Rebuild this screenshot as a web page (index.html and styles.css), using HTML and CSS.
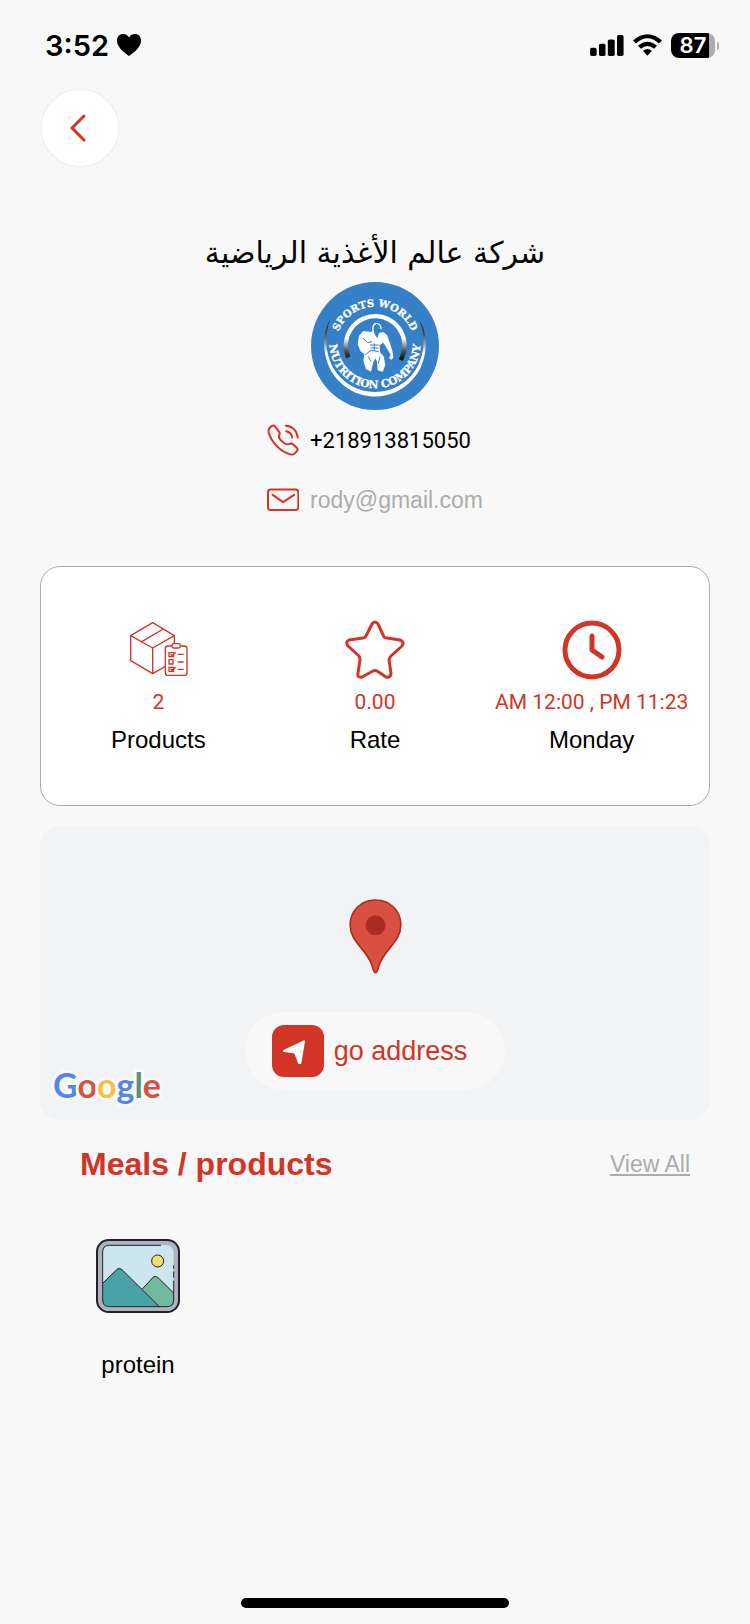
FILE: index.html
```
<!DOCTYPE html>
<html lang="en">
<head>
<meta charset="utf-8">
<meta name="viewport" content="width=device-width, initial-scale=1">
<title>Store profile</title>
<link rel="stylesheet" href="styles.css">
</head>
<body>
<div class="status">
  <div class="status-left">
    <span>3:52</span>
    <svg class="heart" viewBox="350 102 72 66" aria-hidden="true"><path d="M386 168C376 160 350 144 350 122C350 110 358 102 368 102C377 102 383 106 386 113C389 106 395 102 404 102C414 102 422 110 422 122C422 144 396 160 386 168Z"/></svg>
  </div>
  <div class="status-right">
    <svg class="signal" viewBox="93 72 103 64" aria-hidden="true"><rect x="93" y="111" width="20" height="25" rx="5"/><rect x="120" y="99" width="20" height="37" rx="5"/><rect x="147" y="86" width="21" height="50" rx="5"/><rect x="175" y="72" width="20" height="64" rx="5"/></svg>
    <svg class="wifi" viewBox="221 71 87 65" aria-hidden="true"><path d="M221 90Q264 52 308 90L299 99Q264 68 230 99Z"/><path d="M236 106Q264 81 293 106L284 115Q264 98 245 115Z"/><path d="M251 121Q264 110 278 121L264 136Z"/></svg>
    <div class="battery"><span>87</span></div>
  </div>
</div>

<main class="page">
  <button class="back" aria-label="Back">
    <svg viewBox="0 0 16 28" aria-hidden="true"><path d="M14 2L2 14L14 26"/></svg>
  </button>

  <section class="profile">
    <h1 lang="ar" dir="rtl">شركة عالم الأغذية الرياضية</h1>
    <svg class="logo" viewBox="33 21 384 384" role="img" aria-label="Sports World Nutrition Company">
      <defs>
        <linearGradient id="tail" x1="0" y1="135" x2="0" y2="235" gradientUnits="userSpaceOnUse"><stop offset="0" stop-color="#1a1a1a"/><stop offset=".4" stop-color="#444"/><stop offset="1" stop-color="#fff"/></linearGradient>
        <linearGradient id="ring" x1="0" y1="190" x2="0" y2="250" gradientUnits="userSpaceOnUse"><stop offset="0" stop-color="#fff"/><stop offset=".6" stop-color="#555"/><stop offset="1" stop-color="#111"/></linearGradient>
        <path id="top-arc" d="M107 213A118 118 0 0 1 343 213"/>
        <path id="bottom-arc" d="M92 170A137 137 0 1 0 358 170"/>
      </defs>
      <circle cx="225" cy="213" r="192" fill="#3680c7"/>
      <path d="M90 134C66 176 66 230 90 282C150 392 300 392 360 282C384 230 384 176 358 134C376 180 376 228 352 276C296 376 154 376 98 276C74 228 74 180 90 134Z" fill="url(#tail)"/>
      <path d="M145 247A88 88 0 1 1 302 255" fill="none" stroke="url(#ring)" stroke-width="13"/>
      <text class="logo-top"><textPath href="#top-arc" startOffset="50%" text-anchor="middle">SPORTS WORLD</textPath></text>
      <text class="logo-bottom"><textPath href="#bottom-arc" startOffset="50%" text-anchor="middle">NUTRITION COMPANY</textPath></text>
      <path fill="#fff" d="M220 165L213 171L190 168L177 182L173 207L181 228L193 238L190 258L198 282L213 290L220 262L226 250L231 260L233 286L248 290L256 270L251 244L240 232L239 210L250 203L260 219L272 240L267 249L274 254L280 248L277 228L270 205L261 180L249 171L237 174L232 190L224 178Z"/>
      <path fill="none" stroke="#fff" stroke-width="4" d="M219 168C214 137 244 140 243 163"/>
      <path fill="none" stroke="#3680c7" stroke-width="3" d="M190 190L202 203L216 200M223 205V226M209 210H236M211 219H235M196 239L213 226L236 230M205 244L213 260M240 245L235 266"/>
    </svg>
    <div class="contacts">
      <a class="contact phone" href="tel:+218913815050">
        <svg viewBox="55 42 97 97" aria-hidden="true"><path d="M79 49L92 66Q95 70 92 76C86 87 112 107 121 103Q127 100 132 102L146 115Q150 120 145 125C137 136 131 137 119 132C91 122 66 93 60 67C58 57 63 52 70 48Q75 45 79 49Z"/><path d="M112 47C132 48 146 62 148 83M113 64C124 66 130 73 131 83"/></svg>
        <span>+218913815050</span>
      </a>
      <a class="contact mail" href="mailto:rody@gmail.com">
        <svg viewBox="55 222 97 97" aria-hidden="true"><rect x="58" y="239" width="92" height="62" rx="8"/><path d="M72 255L104 277L137 255"/></svg>
        <span>rody@gmail.com</span>
      </a>
    </div>
  </section>

  <section class="stats">
    <div class="stat">
      <svg viewBox="292 180 180 180" aria-hidden="true"><g fill="none" stroke="#d23525" stroke-width="4" stroke-linejoin="round"><path d="M431 252V227L366 188L300 227V302L366 341L403 320M300 227L366 264L431 227M366 264V341M333 245L398 207"/><path d="M425 258H411Q404 258 404 266V338Q404 346 411 346H461Q469 346 469 338V266Q469 258 461 258H449"/><rect x="424" y="251" width="25" height="13" rx="5"/><path d="M430 278H415V290H429V284M420 282L424 287L435 277M415 299H427V312H415ZM430 322H415V334H429V328M420 326L424 331L435 321M441 283H459M441 306H459M441 328H459"/></g></svg>
      <strong>2</strong><span>Products</span>
    </div>
    <div class="stat">
      <svg viewBox="0 0 60 60" aria-hidden="true"><path fill="none" stroke="#d23525" stroke-width="3" stroke-linejoin="round" d="M27 4Q30 0 33 4L39 17Q40 18 42 18L55 20Q60 22 57 26L46 36Q44 38 44 40L46 53Q46 58 41 57L32 51Q30 50 28 51L17 57Q12 58 13 53L15 40Q15 38 14 36L3 26Q0 22 4 20L18 18Q20 18 21 16Z"/></svg>
      <strong>0.00</strong><span>Rate</span>
    </div>
    <div class="stat">
      <svg viewBox="0 0 60 60" aria-hidden="true"><g fill="none" stroke="#d23525" stroke-width="5" stroke-linecap="round" stroke-linejoin="round"><circle cx="30" cy="30" r="27"/><path d="M30 16V30L40 37"/></g></svg>
      <strong>AM 12:00 , PM 11:23</strong><span>Monday</span>
    </div>
  </section>

  <section class="map">
    <svg class="pin" viewBox="356 56 158 225" aria-hidden="true"><path fill="#d95040" stroke="#ab2c24" stroke-width="5" d="M435 59C391 59 359 92 359 134C359 184 406 205 423 251C427 262 429 277 435 277C441 277 443 262 447 251C464 205 511 184 511 134C511 92 479 59 435 59Z"/><circle cx="435" cy="135" r="30" fill="#ab2c24"/></svg>
    <button class="go">
      <span class="go-icon"><svg viewBox="126 435 156 156" aria-hidden="true"><path fill="#fff" stroke="#fff" stroke-width="6" stroke-linejoin="round" d="M222 484L162 513L191 517Q195 518 197 522L207 549H211Z"/></svg></span>
      <span>go address</span>
    </button>
    <div class="google" aria-label="Google"><span class="b">G</span><span class="r">o</span><span class="y">o</span><span class="b">g</span><span class="g">l</span><span class="r">e</span></div>
  </section>

  <section class="products">
    <header class="products-head">
      <h2>Meals / products</h2>
      <a href="#all">View All</a>
    </header>
    <div class="product-list">
      <a class="product" href="#protein">
        <svg viewBox="48 57 252 222" aria-hidden="true">
          <rect x="51" y="60" width="246" height="216" rx="35" fill="#b0b0bf" stroke="#202227" stroke-width="6"/>
          <rect x="68" y="76" width="213" height="184" rx="20" fill="#cce6ed"/>
          <path d="M184 209L219 172Q226 166 233 172L281 219V240Q281 260 261 260H230Z" fill="#6fb99d"/>
          <path d="M68 190L110 149Q118 141 126 149L238 260H88Q68 260 68 240Z" fill="#49a2a5"/>
          <g fill="none" stroke="#202227" stroke-width="3"><path d="M243 76H88Q68 76 68 96V240Q68 260 88 260H261Q281 260 281 240V182M281 173V154M281 146V136"/><path d="M68 190L110 149Q118 141 126 149L238 260M187 207L219 172Q226 166 233 172L281 219"/><circle cx="233" cy="123" r="18" fill="#f4dd71"/></g>
        </svg>
        <span>protein</span>
      </a>
    </div>
  </section>
</main>
<div class="home"></div>
</body>
</html>
```
FILE: styles.css
```
* { box-sizing: border-box; }
body {
  margin: 0;
  min-height: 100vh;
  display: flex;
  flex-direction: column;
  background: #f8f8f8;
  color: #000;
  font-family: "Liberation Sans", sans-serif;
  font-size: 24px;
}
svg { display: block; flex: none; }
a { color: inherit; text-decoration: none; }
button { font: inherit; cursor: pointer; }
h1, h2 { margin: 0; }

.status {
  display: flex;
  justify-content: space-between;
  align-items: center;
  height: 88px;
  padding: 2px 35px 0 45px;
  font-family: Inter, sans-serif;
  font-weight: 600;
}
.status-left { display: flex; align-items: center; gap: 8px; font-size: 29px; }
.heart { width: 24px; height: 22px; }
.status-right { display: flex; align-items: center; gap: 9px; }
.signal { width: 34px; height: 21px; }
.wifi { width: 29px; height: 22px; }
.battery {
  position: relative;
  width: 44px;
  height: 25px;
  border-radius: 8px;
  background: linear-gradient(to right, #000 38px, #acacac 38px);
  color: #fff;
  font-size: 22px;
  line-height: 25px;
  text-align: center;
}
.battery::after {
  content: "";
  position: absolute;
  left: 46px;
  top: 9px;
  width: 2px;
  height: 8px;
  border-radius: 0 4px 4px 0;
  background: #acacac;
}

.page { flex: 1; padding: 0 40px; }
.back {
  display: flex;
  align-items: center;
  justify-content: center;
  width: 80px;
  height: 80px;
  padding: 0 4px 0 0;
  border: 2px solid #f2f2f2;
  border-radius: 50%;
  background: #fff;
}
.back svg { width: 16px; height: 28px; fill: none; stroke: #d23525; stroke-width: 3; stroke-linecap: round; stroke-linejoin: round; }

.profile { display: flex; flex-direction: column; align-items: center; padding-top: 64px; }
.profile h1 {
  height: 50px;
  font-family: "DejaVu Sans", sans-serif;
  font-size: 30px;
  font-weight: 400;
  line-height: 42px;
}
.logo { width: 128px; height: 128px; }
.logo-top, .logo-bottom { fill: #fff; stroke: #fff; stroke-width: 1px; font-family: "DejaVu Serif", serif; font-weight: 700; }
.logo-top { font-size: 30px; }
.logo-bottom { font-size: 32px; }
.contact { display: flex; align-items: center; gap: 11px; height: 60px; }
.contact svg { width: 32px; height: 32px; fill: none; stroke: #d23525; stroke-width: 6; stroke-linecap: round; stroke-linejoin: round; }
.phone span { font-family: Roboto, sans-serif; font-size: 22px; }
.mail { color: #acacac; font-size: 23px; }

.stats {
  display: grid;
  grid-template-columns: repeat(3, minmax(0, 1fr));
  margin-top: 36px;
  padding: 53px 9px 46px;
  border: 1px solid #acacac;
  border-radius: 20px;
  background: #fff;
}
.stat { display: flex; flex-direction: column; align-items: center; line-height: 38px; white-space: nowrap; }
.stat svg { width: 60px; height: 60px; margin-bottom: 3px; }
.stat strong { color: #d23525; font-family: Roboto, sans-serif; font-size: 21px; font-weight: 400; }

.map {
  position: relative;
  display: flex;
  flex-direction: column;
  align-items: center;
  gap: 38px;
  margin-top: 20px;
  padding: 73px 0 30px;
  border-radius: 20px;
  background: #f1f3f5;
}
.pin { width: 53px; height: 75px; }
.go {
  display: flex;
  align-items: center;
  gap: 10px;
  height: 78px;
  padding: 0 38px 0 27px;
  border: 0;
  border-radius: 39px;
  background: #f8f8f8;
  color: #d23525;
  font-size: 27px;
}
.go-icon { width: 52px; height: 52px; border-radius: 12px; background: #d23525; }
.google {
  position: absolute;
  left: 13px;
  bottom: 13px;
  font-family: Lato, sans-serif;
  font-size: 34px;
  font-weight: 700;
  line-height: 44px;
  -webkit-text-stroke: 6px #fafafa;
  paint-order: stroke fill;
}
.google .b { color: #5484ed; }
.google .r { color: #d95040; }
.google .y { color: #f2c043; }
.google .g { color: #58937a; }

.products-head { display: flex; justify-content: space-between; align-items: center; padding: 24px 20px 0 40px; }
.products-head h2 { color: #d23525; font-size: 32px; line-height: 40px; }
.products-head a { color: #acacac; font-size: 23px; text-decoration: underline; text-underline-offset: 2px; }
.product-list { display: flex; padding: 55px 40px 0; }
.product { display: flex; flex-direction: column; align-items: center; gap: 36px; width: 116px; line-height: 32px; }
.product svg { width: 84px; height: 74px; }
.home { width: 268px; height: 10px; margin: 0 auto 16px; border-radius: 5px; background: #000; }
```
